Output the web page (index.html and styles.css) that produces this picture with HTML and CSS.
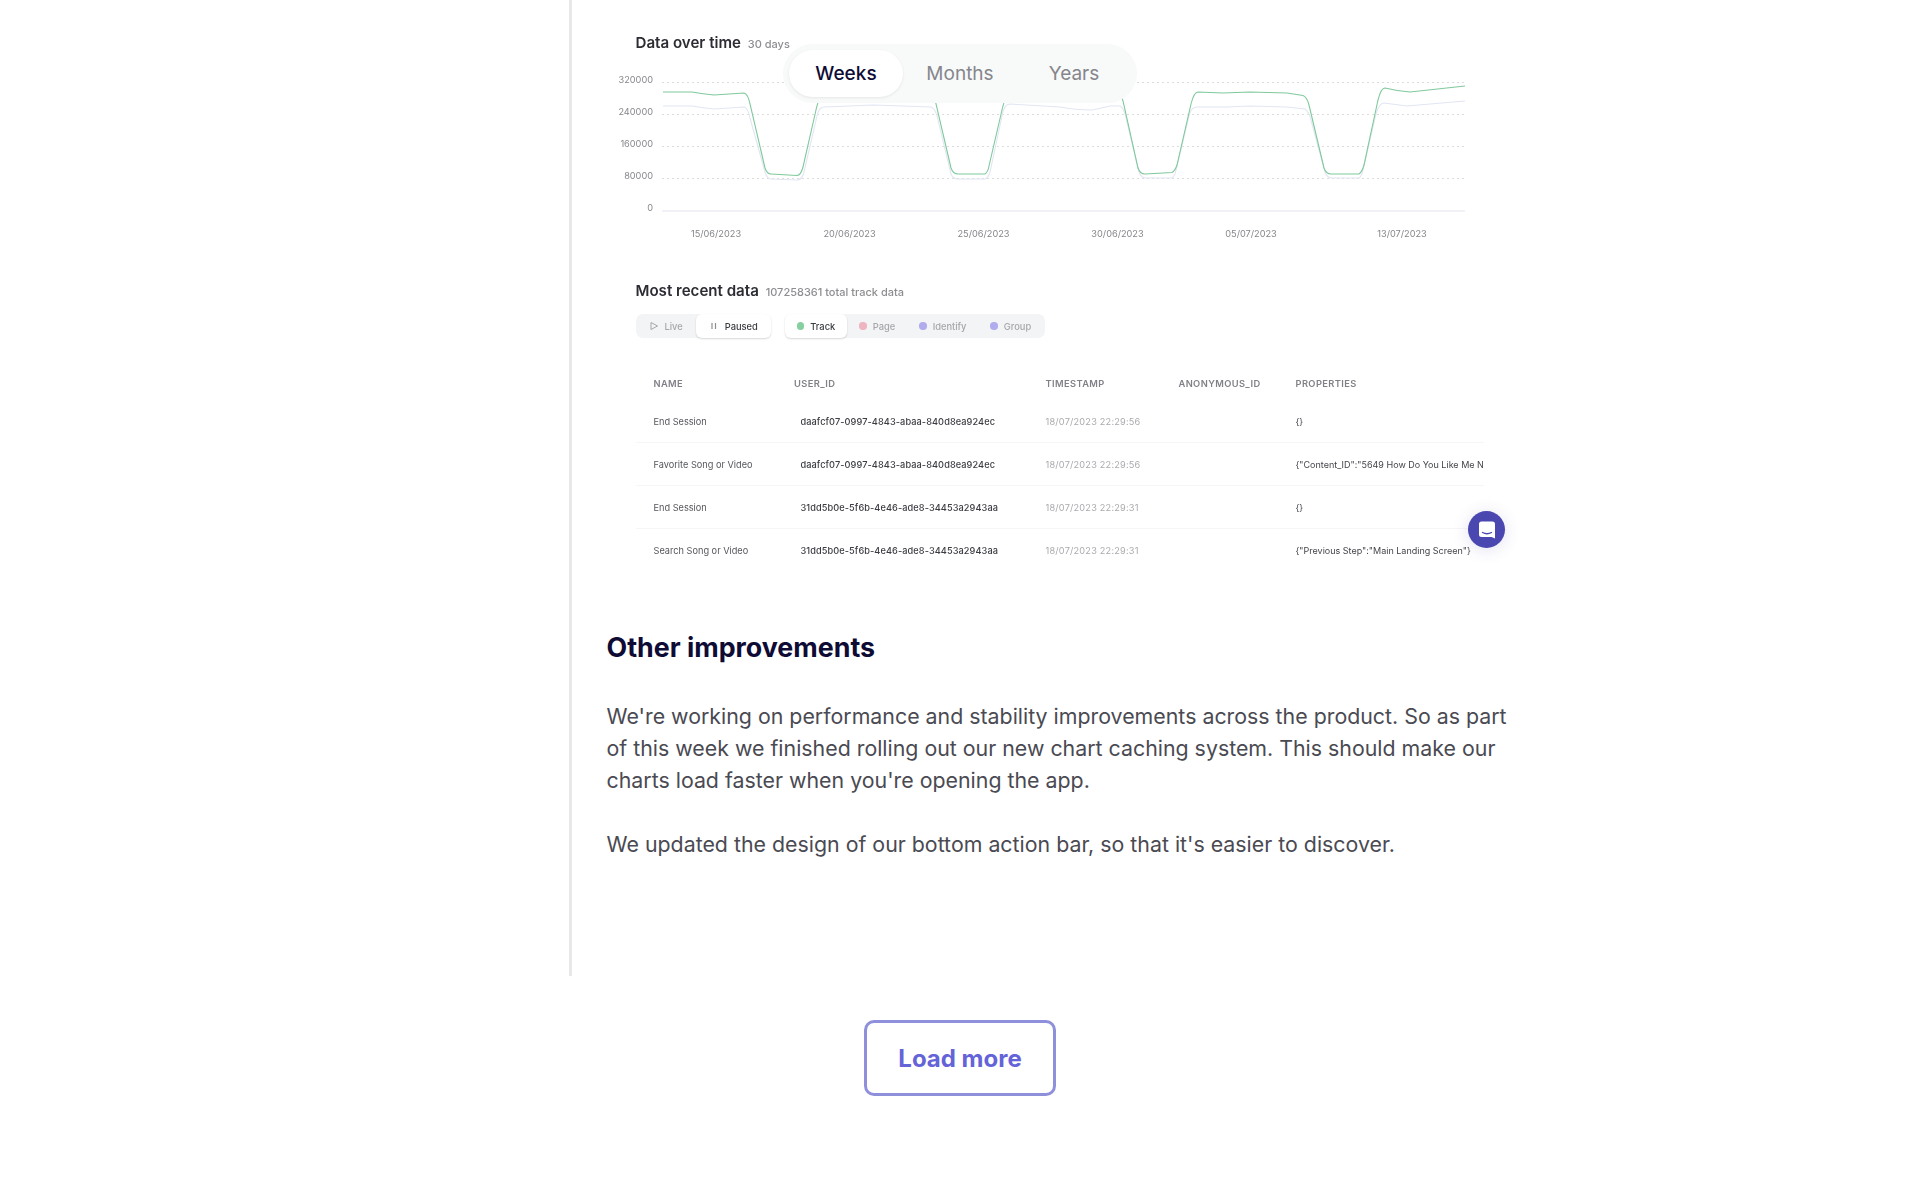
FILE: index.html
```html
<!DOCTYPE html>
<html>
<head>
<meta charset="utf-8">
<title>Changelog</title>
<link rel="stylesheet" href="styles.css">
</head>
<body>

<div class="timeline">

    <div class="shot">
        <div class="shot-title">Data over time <small>30 days</small></div>

        <svg class="chart" width="900" height="195" viewBox="606 53 900 195">
            <g class="grid">
                <line x1="662" y1="82.5" x2="1465" y2="82.5"></line>
                <line x1="662" y1="114.5" x2="1465" y2="114.5"></line>
                <line x1="662" y1="146.5" x2="1465" y2="146.5"></line>
                <line x1="662" y1="178.5" x2="1465" y2="178.5"></line>
            </g>
            <line class="base" x1="662" y1="211" x2="1465" y2="211"></line>
            <g class="ylabels">
                <text x="653" y="83">320000</text>
                <text x="653" y="115">240000</text>
                <text x="653" y="147">160000</text>
                <text x="653" y="179">80000</text>
                <text x="653" y="211">0</text>
            </g>
            <g class="xlabels">
                <text x="716" y="236.500">15/06/2023</text>
                <text x="849.500" y="236.500">20/06/2023</text>
                <text x="983.500" y="236.500">25/06/2023</text>
                <text x="1117.500" y="236.500">30/06/2023</text>
                <text x="1251" y="236.500">05/07/2023</text>
                <text x="1402" y="236.500">13/07/2023</text>
            </g>
            <path class="line-b" d="M663 106 L692 106 Q703 108 714 109 L744 107 Q748 108 750 118 L765 172 Q767 179 771 179 L797 180 Q802 180 804 172 L817 116 Q819 107 824 107 L874 105 L931 107 Q936 109 938 120 L951 174 Q953 179 958 179 L985 179 Q988 178 990 172 L1002 116 Q1004 104 1010 104 L1060 107 Q1075 110 1092 110 Q1102 108 1110 106 L1120 106 Q1124 108 1126 118 L1139 172 Q1141 178 1146 178 L1172 178 Q1175 176 1176 170 L1189 116 Q1191 107 1197 107 L1227 107 L1250 106 L1287 107 L1305 109 Q1309 112 1311 120 L1325 172 Q1327 178 1332 178 L1359 178 Q1362 176 1363 170 L1376 114 Q1379 103 1384 103 L1407 106 L1465 101"></path>
            <path class="line-a" d="M663 92 L692 92 Q703 94 714 95 L744 93 Q748 94 750 104 L765 168 Q767 174 771 174 L797 175.500 Q801 175 803 167 L816 110 Q820 92 826 92 L930 92 Q934 94 936 104 L951 168 Q953 174 958 174 L985 174 Q988 172 989 166 L1002 110 Q1006 92 1012 92 L1118 92 Q1121 94 1123 101 L1138 168 Q1140 174 1145 174 L1172 172.500 Q1175 171 1177 165 L1191 104 Q1194 92 1198 92 L1223 93 L1250 92 L1287 93 L1303 95.500 Q1307 97 1309 105 L1324 168 Q1326 174 1331 174 L1359 174 Q1362 172 1364 165 L1378 100 Q1381 88 1385 88 Q1397 91 1410 92 L1465 86"></path>
        </svg>

        <div class="range-tabs">
            <span class="range-tab active">Weeks</span>
            <span class="range-tab">Months</span>
            <span class="range-tab">Years</span>
        </div>

        <div class="shot-title second">Most recent data <small>107258361 total track data</small></div>

        <div class="toolbar">
            <div class="pills">
                <span class="pill">
                    <svg width="10" height="10" viewBox="0 0 10 10"><path d="M2 1.500 L8.500 5 L2 8.500 Z" fill="none" stroke="#a5a7ab" stroke-width="1"></path></svg>
                    Live
                </span>
                <span class="pill on">
                    <svg width="10" height="10" viewBox="0 0 10 10"><path d="M3 2 V8 M6.500 2 V8" fill="none" stroke="#8d8f93" stroke-width="1.200"></path></svg>
                    Paused
                </span>
            </div>
            <div class="pills events">
                <span class="pill on"><i class="dot green"></i>Track</span>
                <span class="pill"><i class="dot pink"></i>Page</span>
                <span class="pill"><i class="dot violet"></i>Identify</span>
                <span class="pill"><i class="dot violet"></i>Group</span>
            </div>
        </div>

        <div class="data-head">
            <span>NAME</span>
            <span>USER_ID</span>
            <span>TIMESTAMP</span>
            <span>ANONYMOUS_ID</span>
            <span>PROPERTIES</span>
        </div>
        <div class="data-rows">
            <div class="data-row">
                <span>End Session</span>
                <span class="uid">daafcf07-0997-4843-abaa-840d8ea924ec</span>
                <span class="time">18/07/2023 22:29:56</span>
                <span></span>
                <span class="props">{}</span>
            </div>
            <div class="data-row">
                <span>Favorite Song or Video</span>
                <span class="uid">daafcf07-0997-4843-abaa-840d8ea924ec</span>
                <span class="time">18/07/2023 22:29:56</span>
                <span></span>
                <span class="props">{"Content_ID":"5649 How Do You Like Me N</span>
            </div>
            <div class="data-row">
                <span>End Session</span>
                <span class="uid">31dd5b0e-5f6b-4e46-ade8-34453a2943aa</span>
                <span class="time">18/07/2023 22:29:31</span>
                <span></span>
                <span class="props">{}</span>
            </div>
            <div class="data-row">
                <span>Search Song or Video</span>
                <span class="uid">31dd5b0e-5f6b-4e46-ade8-34453a2943aa</span>
                <span class="time">18/07/2023 22:29:31</span>
                <span></span>
                <span class="props">{"Previous Step":"Main Landing Screen"}</span>
            </div>
        </div>

        <div class="chat-bubble">
            <svg width="20" height="20" viewBox="0 0 20 20">
                <path d="M4.500 1.500 H15.500 Q18 1.500 18 4 V18.500 L14.500 17 H4.500 Q2 17 2 14.500 V4 Q2 1.500 4.500 1.500 Z" fill="#fff"></path>
                <path d="M5.500 12.500 Q10 15 14.500 12.500" fill="none" stroke="#4a47b1" stroke-width="1.300" stroke-linecap="round"></path>
            </svg>
        </div>
    </div>

    <h2>Other improvements</h2>
    <p>We're working on performance and stability improvements across the product. So as part of this week we finished rolling out our new chart caching system. This should make our charts load faster when you're opening the app.</p>
    <p>We updated the design of our bottom action bar, so that it's easier to discover.</p>

</div>

<div class="more">
    <a href="#" class="more-btn">Load more</a>
</div>

</body>
</html>
```

FILE: styles.css
```css
body, html {
    margin: 0;
    padding: 0;
    background: #fff;
    font-family: 'Inter', sans-serif;
}

.timeline {
    margin-left: 569px;
    width: 965px;
    height: 976px;
    padding-left: 34px;
    border-left: 3px solid #e8e8e8;
    box-sizing: border-box;
}

/* the product screenshot in the post */
.shot {
    position: relative;
    width: 900px;
    height: 572px;
    padding-top: 33px;
    box-sizing: border-box;
    filter: blur(.35px);
}

.shot-title {
    margin-left: 29.500px;
    height: 20px;
    line-height: 20px;
    font-size: 15.100px;
    font-weight: 600;
    color: #2c2d33;
}

.shot-title small {
    margin-left: 3px;
    font-size: 11px;
    font-weight: 500;
    color: #8d8e92;
}

.shot-title.second {
    margin-top: 33px;
}

.chart {
    display: block;
    height: 195px;
}

.chart .grid line {
    stroke: #dcdcdc;
    stroke-width: 1;
    stroke-dasharray: 2 3;
}

.chart .base {
    stroke: #e2e4ee;
    stroke-width: 1;
}

.chart text {
    font-family: 'Inter', sans-serif;
    font-size: 9.200px;
    fill: #85868a;
}

.ylabels text {
    text-anchor: end;
}

.xlabels text {
    text-anchor: middle;
}

.line-a, .line-b {
    fill: none;
    stroke-width: 1.100;
}

.line-a {
    stroke: #7fc99c;
}

.line-b {
    stroke: #e2e6f3;
}

.range-tabs {
    position: absolute;
    left: 177px;
    top: 44px;
    width: 354px;
    height: 59px;
    padding: 6px;
    box-sizing: border-box;
    display: flex;
    border-radius: 30px;
    background: #f8f9f9;
}

.range-tab {
    width: 114px;
    line-height: 47px;
    text-align: center;
    font-size: 19px;
    color: #85868c;
}

.range-tab.active {
    border-radius: 24px;
    background: #fff;
    color: #0e0b35;
    font-weight: 500;
    box-shadow: 0 1px 3px rgba(0, 0, 0, .08);
}

.toolbar {
    display: flex;
    gap: 14px;
    margin: 13px 0 0 29.500px;
}

.pills {
    display: flex;
    height: 24px;
    border-radius: 7px;
    background: #f3f4f5;
}

.pill {
    display: flex;
    align-items: center;
    gap: 6px;
    padding: 0 13px;
    font-size: 9.300px;
    font-weight: 500;
    color: #a5a7ab;
}

.pills.events .pill {
    padding: 0 12px;
}

.pills.events .pill:last-child {
    padding-right: 14px;
}

.pill.on {
    border-radius: 6px;
    background: #fff;
    color: #3b3c42;
    box-shadow: 0 1px 2px rgba(0, 0, 0, .16);
}

.dot {
    width: 7.500px;
    height: 7.500px;
    border-radius: 50%;
}

.dot.green { background: #86d09f; }
.dot.pink { background: #eeb4c0; }
.dot.violet { background: #b0aced; }

.data-head, .data-row {
    display: grid;
    grid-template-columns: 140.500px 251.500px 133px 117px 188px;
    width: 848px;
    margin-left: 29.500px;
    padding-left: 18px;
    box-sizing: border-box;
}

.data-head {
    margin-top: 36px;
    margin-bottom: 6px;
    line-height: 20px;
    font-size: 9.300px;
    font-weight: 600;
    letter-spacing: .4px;
    color: #808187;
}

.data-row {
    height: 43px;
    line-height: 43px;
    font-size: 9.200px;
    color: #55565c;
    border-bottom: 1px solid #f6f6f7;
}

.data-row:last-child {
    border-bottom: none;
}

.data-row span {
    white-space: nowrap;
    overflow: hidden;
}

.data-row .uid {
    padding-left: 6.500px;
    font-weight: 500;
    letter-spacing: .08px;
    color: #3c3d43;
}

.data-row .time {
    letter-spacing: .2px;
    color: #a9aaae;
}

.data-row .props {
    font-size: 9px;
    color: #44454b;
}

.chat-bubble {
    position: absolute;
    left: 862px;
    top: 511px;
    width: 37px;
    height: 37px;
    display: flex;
    align-items: center;
    justify-content: center;
    border-radius: 50%;
    background: #4a47b1;
    box-shadow: 0 2px 16px rgba(74, 71, 177, .16);
}

h2 {
    margin: 56.500px 0 0 .5px;
    line-height: 36px;
    font-size: 26.800px;
    font-weight: 700;
    color: #0e0b35;
}

p {
    margin: 32px 0 0 .5px;
    width: 905px;
    line-height: 32px;
    font-size: 21.350px;
    color: #4a4a52;
}

h2 + p {
    margin-top: 35px;
}

.more {
    display: flex;
    justify-content: center;
    margin-top: 44px;
}

.more-btn {
    width: 192px;
    height: 76px;
    line-height: 71px;
    border: 3px solid #8f90dc;
    border-radius: 10px;
    box-sizing: border-box;
    text-align: center;
    text-decoration: none;
    font-size: 24px;
    font-weight: 700;
    color: #6563d8;
}
```
